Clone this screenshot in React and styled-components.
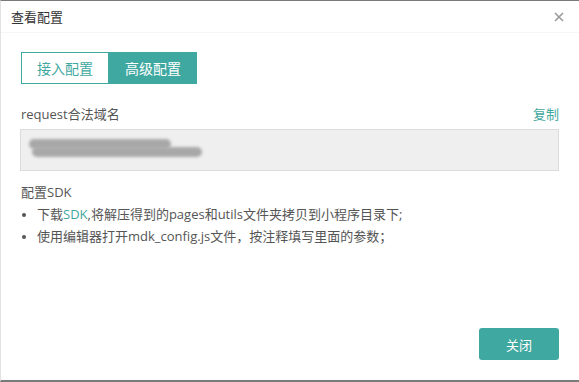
import React from "react";
import styled, { createGlobalStyle } from "styled-components";

const Global = createGlobalStyle`
  html, body { margin: 0; padding: 0; background: #fff; }
  body { font-family: "Open Sans", "Noto Sans CJK SC", sans-serif; }
  * { box-sizing: border-box; }
`;

const TEAL = "#3fa8a0";

const Frame = styled.div`
  width: 579px;
  height: 382px;
  border-top: 1px solid #7a7a7a;
  border-left: 1px solid #e2e2e2;
  border-bottom: 2px solid #7a7a7a;
  display: flex;
  flex-direction: column;
  background: #fff;
`;

const Header = styled.div`
  height: 32px;
  display: flex;
  align-items: center;
  justify-content: space-between;
  padding: 0 15px 0 10px;
  border-bottom: 1px solid #f4f6fa;
  flex: none;
`;

const Title = styled.div`
  font-size: 13px;
  color: #333;
`;

const CloseX = styled.div`
  width: 10px;
  height: 10px;
  display: flex;
  color: #999;
`;

const Body = styled.div`
  flex: 1;
  padding: 19px 20px 0 19px;
  display: flex;
  flex-direction: column;
`;

const Tabs = styled.div`
  display: flex;
  height: 32px;
  width: 176px;
  margin-left: 1px;
`;

const Tab = styled.div`
  flex: 1;
  display: flex;
  align-items: center;
  justify-content: center;
  font-size: 14px;
  border: 1px solid ${TEAL};
  background: ${(p) => (p.$active ? TEAL : "#fff")};
  color: ${(p) => (p.$active ? "#fff" : TEAL)};
`;

const LabelRow = styled.div`
  margin-top: 19px;
  padding-left: 1px;
  display: flex;
  justify-content: space-between;
  align-items: center;
  height: 20px;
  font-size: 13px;
  color: #555;
`;

const Link = styled.span`
  color: ${TEAL};
  cursor: pointer;
`;

const Field = styled.div`
  margin-top: 6px;
  height: 42px;
  width: 539px;
  background: #efefef;
  border: 1px solid #dcdcdc;
  position: relative;
  overflow: hidden;
`;

const Blur = styled.div`
  position: absolute;
  left: ${(p) => p.$x}px;
  top: ${(p) => p.$y}px;
  width: ${(p) => p.$w}px;
  height: 10px;
  border-radius: 5px;
  background: #a8a8a8;
  filter: blur(1.6px);
`;

const Section = styled.div`
  margin-top: 10px;
  padding-left: 1px;
  font-size: 13px;
  color: #555;
  height: 20px;
  display: flex;
  align-items: center;
`;

const List = styled.ul`
  margin: 2px 0 0 0;
  padding: 0 0 0 17px;
  font-size: 13px;
  color: #555;
  li {
    line-height: 22px;
  }
  li::marker {
    color: #555;
    font-size: 12px;
  }
`;

const Footer = styled.div`
  margin-top: auto;
  display: flex;
  justify-content: flex-end;
  padding: 0 0 20px 0;
`;

const Button = styled.button`
  width: 80px;
  height: 32px;
  border: none;
  border-radius: 3px;
  background: ${TEAL};
  color: #fff;
  font-family: inherit;
  font-size: 13px;
`;

export default function App() {
  return (
    <>
      <Global />
      <Frame>
        <Header>
          <Title>查看配置</Title>
          <CloseX>
            <svg width="10" height="10" viewBox="0 0 10 10">
              <path d="M1 1L9 9M9 1L1 9" stroke="#9a9a9a" strokeWidth="1.6" />
            </svg>
          </CloseX>
        </Header>
        <Body>
          <Tabs>
            <Tab>接入配置</Tab>
            <Tab $active>高级配置</Tab>
          </Tabs>
          <LabelRow>
            <span>request合法域名</span>
            <Link>复制</Link>
          </LabelRow>
          <Field>
            <Blur $x={8} $y={9} $w={142} />
            <Blur $x={11} $y={17} $w={170} />
          </Field>
          <Section>配置SDK</Section>
          <List>
            <li>
              下载<Link>SDK</Link>,将解压得到的pages和utils文件夹拷贝到小程序目录下;
            </li>
            <li>使用编辑器打开mdk_config.js文件，按注释填写里面的参数；</li>
          </List>
          <Footer>
            <Button>关闭</Button>
          </Footer>
        </Body>
      </Frame>
    </>
  );
}
